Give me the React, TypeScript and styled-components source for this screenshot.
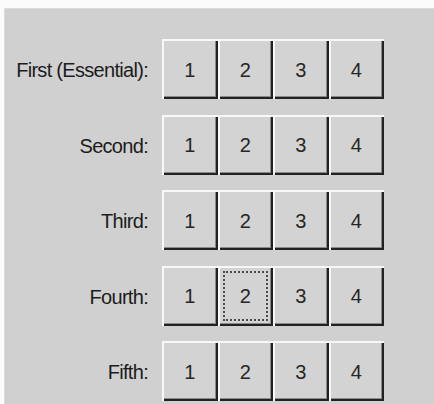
import { Fragment } from 'react';
import styled, { createGlobalStyle, css } from 'styled-components';

const GlobalStyle = createGlobalStyle`
  html, body {
    margin: 0;
    padding: 0;
    background: #fbfbfb;
  }
  body {
    font-family: 'Liberation Sans', Arial, sans-serif;
  }
`;

const Page = styled.div`
  width: 434px;
  height: 404px;
  box-sizing: border-box;
  padding: 8px 0 0 4px;
  background: #fbfbfb;
  overflow: hidden;
`;

const Panel = styled.div`
  height: 100%;
  box-sizing: border-box;
  padding-top: 30px;
  background: #d0d0d0;
  border-top: 1px solid #dcdcdc;
  border-left: 1px solid #dcdcdc;
  display: grid;
  grid-template-columns: 143px auto;
  grid-auto-rows: 60px;
  column-gap: 14px;
  row-gap: 15.5px;
  justify-content: start;
  align-content: start;
`;

const Label = styled.div`
  display: flex;
  align-items: center;
  justify-content: flex-end;
  padding-top: 3px;
  font-size: 20px;
  letter-spacing: -0.7px;
  color: #1c1c1c;
  white-space: nowrap;
`;

const ButtonGroup = styled.div`
  display: flex;
`;

const Choice = styled.button<{ $focused?: boolean }>`
  width: 55.5px;
  height: 60px;
  padding: 2px 0 0;
  border: none;
  background: #d3d3d3;
  font-family: 'Liberation Sans', Arial, sans-serif;
  font-size: 20px;
  color: #262626;
  box-shadow:
    inset 2px 2px #f8f8f8,
    inset -2px -2px #222222,
    inset -3px -3px #8a8a8a;
  cursor: default;

  ${({ $focused }) =>
    $focused &&
    css`
      outline: 2px dotted #4a4a4a;
      outline-offset: -7px;
    `}
`;

const ranks = ['First (Essential):', 'Second:', 'Third:', 'Fourth:', 'Fifth:'];

export default function App() {
  return (
    <>
      <GlobalStyle />
      <Page>
        <Panel>
          {ranks.map((rank, row) => (
            <Fragment key={rank}>
              <Label>{rank}</Label>
              <ButtonGroup>
                {[1, 2, 3, 4].map((n) => (
                  <Choice key={n} $focused={row === 3 && n === 2}>
                    {n}
                  </Choice>
                ))}
              </ButtonGroup>
            </Fragment>
          ))}
        </Panel>
      </Page>
    </>
  );
}
